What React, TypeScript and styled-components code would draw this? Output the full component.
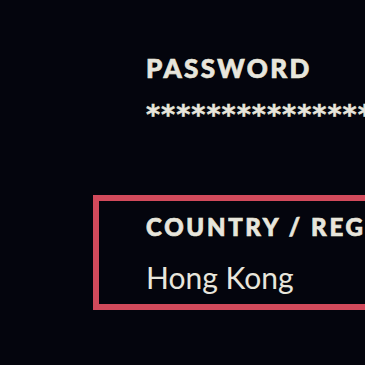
import React from "react";
import styled, { createGlobalStyle } from "styled-components";

const Global = createGlobalStyle`
  html, body {
    margin: 0;
    padding: 0;
    background: #04050d;
    overflow: hidden;
  }
  #root {
    width: 365px;
    height: 365px;
    overflow: hidden;
  }
`;

const Page = styled.div`
  display: flex;
  flex-direction: column;
  width: 365px;
  height: 365px;
  box-sizing: border-box;
  padding: 55px 0 0 93px;
  background: #04050d;
  font-family: Lato, "Noto Sans", sans-serif;
  color: #e8e6dc;
`;

const Field = styled.div<{ $boxed?: boolean }>`
  display: flex;
  flex-direction: column;
  width: 600px;
  box-sizing: border-box;
  padding: ${(p) => (p.$boxed ? "14px 0 12px 47px" : "0 0 0 53px")};
  border: ${(p) => (p.$boxed ? "6px solid #d24a5b" : "none")};
  margin-top: ${(p) => (p.$boxed ? "67px" : "0")};
`;

const Label = styled.div`
  font-size: 26px;
  font-weight: 900;
  line-height: 1;
  letter-spacing: 2.4px;
  white-space: nowrap;
  -webkit-text-stroke: 0.7px currentColor;
`;

const SmallLabel = styled(Label)`
  font-size: 24px;
  letter-spacing: 2.7px;
`;

const Masked = styled.div`
  margin-top: 20px;
  font-family: "DejaVu Sans", sans-serif;
  font-size: 27px;
  font-weight: 700;
  line-height: 1;
  letter-spacing: 1px;
  white-space: nowrap;
  -webkit-text-stroke: 0.5px currentColor;
`;

const Value = styled.div`
  margin-top: 23px;
  font-size: 30px;
  font-weight: 400;
  line-height: 1;
  white-space: nowrap;
`;

export default function App() {
  return (
    <>
      <Global />
      <Page>
        <Field>
          <Label>PASSWORD</Label>
          <Masked>{"*".repeat(20)}</Masked>
        </Field>
        <Field $boxed>
          <SmallLabel>COUNTRY / REGION</SmallLabel>
          <Value>Hong Kong</Value>
        </Field>
      </Page>
    </>
  );
}
